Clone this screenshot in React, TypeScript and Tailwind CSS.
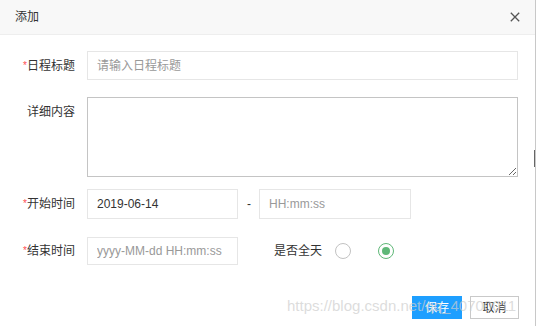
import React from "react";

const FONT = "font-['Liberation_Sans','Noto_Sans_CJK_SC',sans-serif]";

const Label: React.FC<{ text: string; required?: boolean; top?: boolean }> = ({
  text,
  required,
  top,
}) => (
  <div
    className={[
      "w-[75px] shrink-0 text-right text-[12px] text-[#333] leading-[16px]",
      top ? "self-start pt-[7px]" : "",
    ].join(" ")}
  >
    {required && <span className="text-[#ff4d4f] text-[10px] align-[1px]">*</span>}
    {text}
  </div>
);

const inputBase =
  "h-full border border-[#e6e6e6] bg-white px-[9px] text-[12px] text-[#333] placeholder:text-[#999] outline-none";

export default function App() {
  return (
    <div
      className={`${FONT} relative w-[536px] h-[326px] overflow-hidden bg-white border-r border-[#c8c8c8]`}
    >
      {/* Header */}
      <div className="flex h-[35px] items-center justify-between border-b border-[#eeeeee] bg-[#f8f8f8] pl-[15px] pr-[15px]">
        <span className="text-[12px] text-[#333]">添加</span>
        <svg width="10" height="10" viewBox="0 0 10 10">
          <path d="M0.8 0.8 L9.2 9.2 M9.2 0.8 L0.8 9.2" stroke="#555" strokeWidth="1.3" />
        </svg>
      </div>

      {/* Form */}
      <div className="flex flex-col pt-[16px]">
        <div className="flex h-[29px] items-center gap-[12px]">
          <Label text="日程标题" required />
          <input className={`${inputBase} w-[431px]`} placeholder="请输入日程标题" />
        </div>

        <div className="mt-[17px] flex h-[80px] items-start gap-[12px]">
          <Label text="详细内容" top />
          <textarea className="h-full w-[431px] border border-[#c4c4c4] bg-white px-[9px] py-[6px] text-[12px] outline-none" />
        </div>

        <div className="mt-[12px] flex h-[30px] items-center">
          <Label text="开始时间" required />
          <input className={`${inputBase} ml-[12px] w-[151px]`} defaultValue="2019-06-14" />
          <span className="ml-[9px] w-[12px] text-[12px] text-[#333]">-</span>
          <input className={`${inputBase} w-[152px]`} placeholder="HH:mm:ss" />
        </div>

        <div className="mt-[18px] flex h-[28px] items-center gap-[12px]">
          <Label text="结束时间" required />
          <input className={`${inputBase} w-[151px]`} placeholder="yyyy-MM-dd HH:mm:ss" />
          <span className="ml-[24px] text-[12px] text-[#333]">是否全天</span>
          <div className="ml-[1px] flex items-center gap-[27px]">
            <span className="h-[16px] w-[16px] rounded-full border border-[#c2c2c2] bg-white" />
            <span className="flex h-[16px] w-[16px] items-center justify-center rounded-full border border-[#5fb878] bg-white">
              <span className="h-[8px] w-[8px] rounded-full bg-[#5fb878]" />
            </span>
          </div>
        </div>

        {/* Footer */}
        <div className="mt-[31px] flex justify-end gap-[8px] pr-[16px]">
          <button className="h-[23px] w-[50px] bg-[#1e9fff] text-[12px] text-white">保存</button>
          <button className="h-[23px] w-[49px] border border-[#c9c9c9] bg-white text-[12px] text-[#333]">
            取消
          </button>
        </div>
      </div>

      {/* scrollbar thumb */}
      <div className="absolute right-0 top-[150px] h-[17px] w-[1px] bg-[#666]" />

      {/* watermark */}
      <div className="pointer-events-none absolute left-[287px] top-[297px] whitespace-nowrap text-[15px] leading-[18px] text-[rgba(205,205,205,0.7)] font-['Liberation_Sans',sans-serif]">
        https://blog.csdn.net/qq_40700011
      </div>
    </div>
  );
}
